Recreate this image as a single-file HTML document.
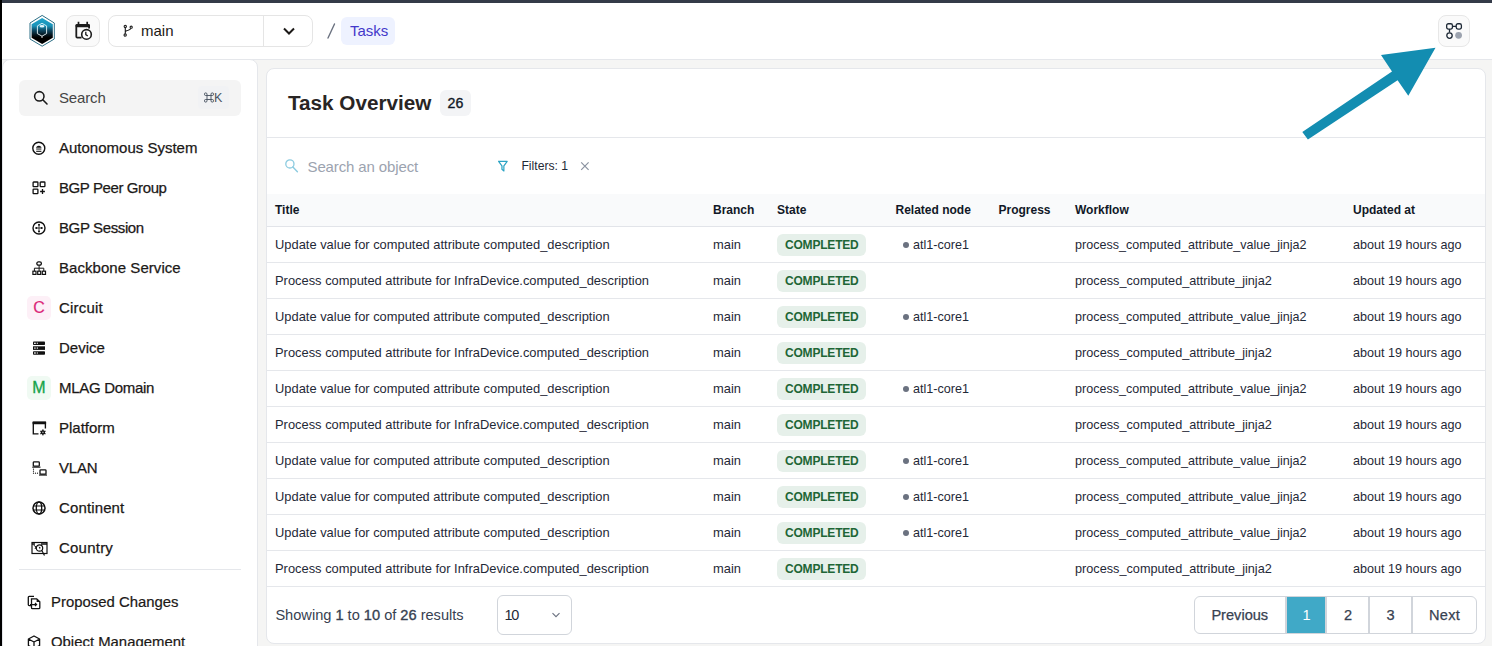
<!DOCTYPE html>
<html><head><meta charset="utf-8">
<style>
*{box-sizing:border-box;margin:0;padding:0}
html,body{width:1492px;height:646px;overflow:hidden;background:#fff}
body{font-family:"Liberation Sans",sans-serif;color:#1f2937;position:relative}
.abs{position:absolute}
#topbar{left:0;top:0;width:1492px;height:3px;background:#343b48}
#leftbar{left:0;top:0;width:2px;height:646px;background:#000;z-index:5}
#header{left:2px;top:3px;width:1490px;height:57px;background:#fff;border-bottom:1px solid #e5e7eb}
#main{left:2px;top:60px;width:1490px;height:586px;background:#f5f5f4}
#sidebar{left:2px;top:59px;width:256px;height:600px;background:#fff;border:1px solid #e5e7eb;border-radius:8px}
#card{left:266px;top:68px;width:1220px;height:576px;background:#fff;border:1px solid #e5e7eb;border-radius:8px;overflow:hidden}
.item{font-size:15px;line-height:20px;color:#1c1917;white-space:nowrap;-webkit-text-stroke:0.25px #1c1917}
.item2{font-size:14.9px;line-height:20px;color:#1c1917;white-space:nowrap;-webkit-text-stroke:0.2px #1c1917}
.t{white-space:nowrap}
.b{-webkit-text-stroke:0.35px #374151}
</style></head><body>
<div id="main" class="abs"></div>
<div id="header" class="abs">
  <svg class="abs" style="left:25px;top:11px" width="30" height="36" viewBox="0 0 30 36">
    <defs><linearGradient id="lg" x1="0" y1="0" x2="0" y2="1">
      <stop offset="0" stop-color="#1ea3c9"/><stop offset="0.3" stop-color="#1a93b9"/>
      <stop offset="0.48" stop-color="#0e4660"/><stop offset="0.66" stop-color="#03121a"/><stop offset="0.75" stop-color="#000"/><stop offset="1" stop-color="#000"/></linearGradient></defs>
    <polygon points="15.15,1.4 27.3,9 27.3,25 15.15,32.2 3,25 3,9" fill="#fff" stroke="#2d6f86" stroke-width="1"/>
    <polygon points="15.15,3.9 25.8,10.2 25.8,23.8 15.15,30 4.6,23.8 4.6,10.2" fill="url(#lg)"/>
    <polygon points="15,9.3 19.6,11.9 19.6,19.6 15,22.2 10.4,19.6 10.4,11.9" fill="none" stroke="#e8f6fb" stroke-width="0.9"/>
    <path d="M15,22.2 V24" stroke="#fff" stroke-width="0.9" fill="none"/>
    <ellipse cx="15" cy="12.2" rx="2.4" ry="1.3" fill="#e3f5fb"/>
  </svg>
  <div class="abs" style="left:64px;top:12px;width:34px;height:32px;background:#fafafa;border:1px solid #e7e7e7;border-radius:8px"></div>
  <svg class="abs" style="left:73px;top:17px" width="20" height="22" viewBox="0 0 20 22">
    <path d="M3.5,1.8 V4.8 M12.2,1.8 V4.8" stroke="#1c1c1c" stroke-width="1.7" fill="none"/>
    <path d="M6.5,17.6 H2.3 Q1.3,17.6 1.3,16.6 V5.5 Q1.3,4.9 2.3,4.9 H13.1 Q14.1,4.9 14.1,5.5 V8.5" stroke="#1c1c1c" stroke-width="1.8" fill="none"/>
    <rect x="0.6" y="4.25" width="14.2" height="2.9" rx="0.8" fill="#1c1c1c"/>
    <circle cx="11.5" cy="14.4" r="4.8" fill="#fff" stroke="#1c1c1c" stroke-width="1.6"/>
    <path d="M10.8,11.8 V14.6 L12.8,16" stroke="#1c1c1c" stroke-width="1.3" fill="none"/>
  </svg>
  <div class="abs" style="left:106px;top:12px;width:205px;height:32px;background:#fff;border:1px solid #e5e5e5;border-radius:8px"></div>
  <div class="abs" style="left:261px;top:13px;width:1px;height:30px;background:#e5e5e5"></div>
  <svg class="abs" style="left:121px;top:21px" width="12" height="14" viewBox="0 0 12 14">
    <path d="M2.3,3.5 V10 M2.3,8.2 Q2.5,6.6 5.2,6.2 Q7.5,5.8 8,4.2" stroke="#222" stroke-width="1.15" fill="none"/>
    <circle cx="2.3" cy="2.5" r="1.15" fill="#fff" stroke="#222" stroke-width="1.1"/>
    <circle cx="2.2" cy="11" r="1.15" fill="#fff" stroke="#222" stroke-width="1.1"/>
    <circle cx="8.2" cy="3.2" r="1.1" fill="#fff" stroke="#222" stroke-width="1.1"/>
  </svg>
  <div class="abs" style="left:139px;top:18px;font-size:15px;line-height:20px;color:#1c1917">main</div>
  <svg class="abs" style="left:280px;top:23px" width="14" height="10" viewBox="0 0 14 10">
    <path d="M2,2.5 L7,7.5 L12,2.5" stroke="#1c1917" stroke-width="2" fill="none"/>
  </svg>
  <svg class="abs" style="left:323px;top:19px" width="12" height="18" viewBox="0 0 12 18"><path d="M9.5,2 L3,16" stroke="#6b7280" stroke-width="1.4" stroke-linecap="round"/></svg>
  <div class="abs" style="left:339px;top:14px;width:54px;height:28px;background:#eef2ff;border-radius:6px"></div>
  <div class="abs" style="left:348px;top:18px;font-size:15px;line-height:20px;color:#4338ca">Tasks</div>
  <div class="abs" style="left:1436px;top:12px;width:32px;height:32px;background:#fafafa;border:1px solid #e7e7e7;border-radius:8px"></div>
  <svg class="abs" style="left:1444px;top:20px" width="18" height="18" viewBox="0 0 18 18">
    <rect x="0.65" y="0.75" width="5.8" height="5.3" rx="1.7" fill="none" stroke="#1f2a37" stroke-width="1.3"/>
    <rect x="10.2" y="0.75" width="5.2" height="5.3" rx="1.7" fill="none" stroke="#1f2a37" stroke-width="1.3"/>
    <path d="M6.4,3.4 H10.2 M3.5,6 V9.5" stroke="#1f2a37" stroke-width="1.3"/>
    <circle cx="3.5" cy="12.6" r="2.7" fill="none" stroke="#1f2a37" stroke-width="1.3"/>
    <circle cx="12.6" cy="12.35" r="3.4" fill="#9ca3af"/>
  </svg>
</div>
<div id="topbar" class="abs"></div>
<div id="leftbar" class="abs"></div>
<div id="sidebar" class="abs"></div>
<div id="sidebarc">
<div class="abs" style="left:19px;top:80px;width:222px;height:36px;background:#f4f4f4;border-radius:6px"></div>
<svg class="abs" style="left:32px;top:89px" width="18" height="18" viewBox="0 0 18 18"><circle cx="7.3" cy="7.3" r="4.7" stroke="#1a1a1a" stroke-width="1.55" fill="none"/><path d="M10.8,10.8 L15,15" stroke="#1a1a1a" stroke-width="1.6" stroke-linecap="round"/></svg>
<div class="abs" style="left:59px;top:88px;font-size:15px;line-height:20px;color:#454545;letter-spacing:-0.15px">Search</div>
<div class="abs" style="left:198px;top:86px;width:31px;height:23px;background:#f1f2f4;border-radius:4px"></div>
<svg class="abs" style="left:204px;top:92px" width="10" height="11" viewBox="0 0 10 11"><path d="M3,3.5 H7 V7.5 H3 Z M3,3.5 V2.2 A1.3,1.3 0 1,0 1.7,3.5 H3 M7,3.5 V2.2 A1.3,1.3 0 1,1 8.3,3.5 H7 M3,7.5 V8.8 A1.3,1.3 0 1,1 1.7,7.5 H3 M7,7.5 V8.8 A1.3,1.3 0 1,0 8.3,7.5 H7" stroke="#4b5563" stroke-width="0.95" fill="none"/></svg>
<div class="abs" style="left:214px;top:90px;font-size:12.5px;line-height:16px;color:#4b5563">K</div>
<svg class="abs" style="left:32px;top:140.5px" width="15" height="15" viewBox="0 0 15 15"><circle cx="6.8" cy="7.3" r="6" stroke="#111" stroke-width="1.4" fill="none"/><path d="M4.3,5.9 Q6.8,3.4 9.3,5.9 Z" fill="#111"/><path d="M4.2,6.7 H9.4 M4.2,8.1 H9.4" stroke="#111" stroke-width="0.9"/><path d="M4.2,10.3 H9.4" stroke="#111" stroke-width="1.1"/></svg><div class="abs item" style="left:59px;top:137.7px">Autonomous System</div>
<svg class="abs" style="left:32px;top:180.5px" width="15" height="15" viewBox="0 0 15 15"><rect x="1.1" y="1" width="4.8" height="4.7" rx="0.6" stroke="#111" fill="none" stroke-width="1.3"/><rect x="8.2" y="1" width="4.7" height="4.7" rx="0.6" stroke="#111" fill="none" stroke-width="1.3"/><rect x="1.1" y="8.1" width="4.8" height="4.5" rx="0.6" stroke="#111" fill="none" stroke-width="1.3"/><path d="M8.1,10.5 H12.9 M10.5,8.1 V12.9" stroke="#111" stroke-width="1.3"/></svg><div class="abs item" style="left:59px;top:177.7px;letter-spacing:-0.4px">BGP Peer Group</div>
<svg class="abs" style="left:32px;top:220.5px" width="15" height="15" viewBox="0 0 15 15"><circle cx="7" cy="7" r="6" stroke="#111" fill="none" stroke-width="1.4"/><circle cx="7" cy="3.8" r="1" fill="#111"/><circle cx="7" cy="10.4" r="1" fill="#111"/><circle cx="4.3" cy="7" r="1.1" fill="#111"/><circle cx="9.7" cy="7" r="1.1" fill="#111"/><path d="M7,3.8 V10.4 M4.3,7 H9.7" stroke="#111" stroke-width="0.8"/></svg><div class="abs item" style="left:59px;top:217.7px;letter-spacing:-0.38px">BGP Session</div>
<svg class="abs" style="left:32px;top:260.5px" width="15" height="15" viewBox="0 0 15 15"><rect x="4.8" y="0.9" width="4.6" height="3.3" rx="1.6" stroke="#111" fill="none" stroke-width="1.3"/><path d="M7.1,4.2 V7.2 M2.4,10 V7.2 H11.8 V10 M7.1,7.2 V10" stroke="#111" stroke-width="1" fill="none"/><rect x="0.9" y="10.2" width="3.1" height="3.2" stroke="#111" fill="none" stroke-width="1.2"/><rect x="5.7" y="10.2" width="3" height="3.2" stroke="#111" fill="none" stroke-width="1.2"/><rect x="10.3" y="10.2" width="3.2" height="3.2" stroke="#111" fill="none" stroke-width="1.2"/></svg><div class="abs item" style="left:59px;top:257.7px;letter-spacing:0.05px">Backbone Service</div>
<div class="abs" style="left:27px;top:296.0px;width:24px;height:24px;background:#fdf0f7;border-radius:5px"></div><div class="abs" style="left:27px;top:296.0px;width:24px;height:24px;line-height:24px;text-align:center;font-size:16px;color:#db2777;-webkit-text-stroke:0.2px #db2777">C</div><div class="abs item" style="left:59px;top:297.7px;letter-spacing:0.18px">Circuit</div>
<svg class="abs" style="left:32px;top:340.5px" width="15" height="15" viewBox="0 0 15 15"><rect x="1" y="0.5" width="12" height="3.6" rx="0.8" fill="#111"/><rect x="1" y="5.3" width="12" height="3.6" fill="#111"/><rect x="1" y="10.2" width="12" height="3.6" rx="0.8" fill="#111"/><rect x="2" y="1.7" width="1.8" height="1.2" fill="#fff"/><rect x="4.8" y="1.6" width="0.9" height="1.4" fill="#fff"/><rect x="2" y="6.5" width="1.8" height="1.2" fill="#ccc"/><rect x="4.8" y="6.3" width="0.9" height="1.6" fill="#fff"/><rect x="2" y="11.4" width="1.8" height="1.2" fill="#fff"/><rect x="4.8" y="11.3" width="0.9" height="1.4" fill="#fff"/></svg><div class="abs item" style="left:59px;top:337.7px">Device</div>
<div class="abs" style="left:27px;top:376.0px;width:24px;height:24px;background:#f0faf3;border-radius:5px"></div><div class="abs" style="left:27px;top:376.0px;width:24px;height:24px;line-height:24px;text-align:center;font-size:16px;color:#16a34a;-webkit-text-stroke:0.3px #16a34a">M</div><div class="abs item" style="left:59px;top:377.7px;letter-spacing:-0.3px">MLAG Domain</div>
<svg class="abs" style="left:32px;top:420.5px" width="15" height="15" viewBox="0 0 15 15"><path d="M6.5,12.9 H1.3 V1.5 H13.4 V7.4" stroke="#111" stroke-width="1.35" fill="none"/><rect x="0.6" y="0.5" width="13.5" height="2.8" rx="0.5" fill="#111"/><circle cx="10.9" cy="11.4" r="2.1" fill="#111"/><g fill="#111"><rect x="10.3" y="8.4" width="1.2" height="6"/><rect x="10.3" y="8.4" width="1.2" height="6" transform="rotate(60 10.9 11.4)"/><rect x="10.3" y="8.4" width="1.2" height="6" transform="rotate(120 10.9 11.4)"/></g><circle cx="10.9" cy="11.4" r="0.8" fill="#aaa"/></svg><div class="abs item" style="left:59px;top:417.7px">Platform</div>
<svg class="abs" style="left:32px;top:460.5px" width="15" height="15" viewBox="0 0 15 15"><rect x="1.3" y="0.8" width="6" height="4.4" rx="0.8" stroke="#111" stroke-width="1.3" fill="none"/><rect x="0.2" y="5.6" width="8.3" height="1.1" fill="#111"/><rect x="8" y="8.8" width="6" height="4.4" rx="0.8" stroke="#111" stroke-width="1.3" fill="none"/><rect x="7" y="13.5" width="8" height="1.1" fill="#111"/><circle cx="1.5" cy="8.2" r="0.6" fill="#111"/><circle cx="1.5" cy="10.2" r="0.6" fill="#111"/><circle cx="1.5" cy="12.2" r="0.6" fill="#111"/><circle cx="3.5" cy="12.2" r="0.6" fill="#111"/><circle cx="5.5" cy="12.2" r="0.6" fill="#111"/></svg><div class="abs item" style="left:59px;top:457.7px;letter-spacing:-0.18px">VLAN</div>
<svg class="abs" style="left:32px;top:500.5px" width="15" height="15" viewBox="0 0 15 15"><circle cx="7" cy="7" r="6" stroke="#111" fill="none" stroke-width="1.5"/><ellipse cx="7" cy="7" rx="2.7" ry="6" stroke="#111" fill="none" stroke-width="1.3"/><path d="M1,5 H13 M1,9 H13" stroke="#111" stroke-width="1.2"/></svg><div class="abs item" style="left:59px;top:497.7px;letter-spacing:0.13px">Continent</div>
<svg class="abs" style="left:31px;top:540.5px" width="17" height="15" viewBox="0 0 17 15"><rect x="1" y="1.5" width="15" height="11" stroke="#111" stroke-width="1.2" fill="none"/><path d="M1,3 H4 M10,3 H16" stroke="#111" stroke-width="1.4"/><circle cx="8.5" cy="7" r="3.2" stroke="#111" stroke-width="1.2" fill="none"/><path d="M7.5,5.5 L9.5,6.2 L9,8.5 Z" fill="#111"/><path d="M10.8,9.5 L13.5,14.5" stroke="#111" stroke-width="1.2"/><path d="M2.5,4 L5,6 L4,8" stroke="#111" stroke-width="1" fill="none"/></svg><div class="abs item" style="left:59px;top:537.7px;letter-spacing:0.22px">Country</div>
<div class="abs" style="left:19px;top:569px;width:222px;height:1px;background:#e5e7eb"></div>
<svg class="abs" style="left:27px;top:595px" width="15" height="15" viewBox="0 0 15 15"><path d="M7,1.3 H2.2 Q1.3,1.3 1.3,2.2 V9.8 Q1.3,10.6 2.2,10.6 H4.5" stroke="#111" stroke-width="1.3" fill="none"/><path d="M4.5,3.8 H9.7 L12.8,6.8 V12.7 Q12.8,13.6 11.9,13.6 H5.4 Q4.5,13.6 4.5,12.7 V3.8 Z" stroke="#111" stroke-width="1.3" fill="none"/><path d="M9.6,3.8 L12.8,7 H9.6 Z" fill="#111"/><path d="M3,9.6 H9.5 M8,8 L9.6,9.6 L8,11.2" stroke="#111" stroke-width="1.2" fill="none"/></svg><div class="abs item2" style="left:51px;top:592px">Proposed Changes</div>
<svg class="abs" style="left:27px;top:635px" width="15" height="15" viewBox="0 0 15 15"><path d="M7,1 L12.6,4 V10.5 L7,13.5 L1.4,10.5 V4 Z M1.4,4 L7,7 L12.6,4 M7,7 V13.5" stroke="#111" stroke-width="1.3" fill="none" stroke-linejoin="round"/></svg><div class="abs item2" style="left:51px;top:632px">Object Management</div>
</div>
<div id="card" class="abs"></div>
<div id="cardc">
<div class="abs t" style="left:288px;top:88.73px;font-size:20.7px;line-height:27px;color:#292524;font-weight:700;">Task Overview</div>
<div class="abs" style="left:440px;top:90px;width:30.5px;height:25.8px;background:#f3f4f6;border-radius:6px"></div>
<div class="abs t" style="left:447.5px;top:94.18px;font-size:14.2px;line-height:18px;color:#111827;-webkit-text-stroke:0.35px #111827;">26</div>
<div class="abs" style="left:267px;top:137px;width:1218px;height:1px;background:#e5e7eb"></div>
<svg class="abs" style="left:283px;top:158px" width="17" height="17" viewBox="0 0 17 17"><circle cx="6.9" cy="5.9" r="4.1" stroke="#8ccbe0" stroke-width="1.3" fill="none"/><path d="M9.9,9.1 L14.4,13.8" stroke="#8ccbe0" stroke-width="1.4" stroke-linecap="round"/></svg>
<div class="abs t" style="left:307.5px;top:157.10px;font-size:15px;line-height:20px;color:#9ca3af;letter-spacing:-0.12px;">Search an object</div>
<svg class="abs" style="left:496px;top:159px" width="14" height="14" viewBox="0 0 14 14"><path d="M2.6,2.3 H11.2 L7.9,6.9 V12 L5.9,10.3 V6.9 Z" stroke="#2aa3c4" stroke-width="1.15" fill="none" stroke-linejoin="round"/><path d="M6.2,6.5 H7.6 V10.5 L6.2,9.6 Z" fill="#2aa3c4" opacity="0.3"/></svg>
<div class="abs t" style="left:521.4px;top:157.77px;font-size:12.2px;line-height:16px;color:#1f2937;">Filters: 1</div>
<svg class="abs" style="left:579px;top:160px" width="12" height="12" viewBox="0 0 12 12"><path d="M2.2,2.4 L9.6,9.8 M9.6,2.4 L2.2,9.8" stroke="#8b93a1" stroke-width="1.2"/></svg>
<div class="abs" style="left:267px;top:194px;width:1218px;height:32px;background:#f9fafb"></div>
<div class="abs" style="left:267px;top:226px;width:1218px;height:1px;background:#e2e4e9"></div>
<div class="abs t" style="left:275px;top:201.54px;font-size:12px;line-height:16px;color:#111827;font-weight:700;">Title</div>
<div class="abs t" style="left:713px;top:201.54px;font-size:12px;line-height:16px;color:#111827;font-weight:700;">Branch</div>
<div class="abs t" style="left:777px;top:201.54px;font-size:12px;line-height:16px;color:#111827;font-weight:700;">State</div>
<div class="abs t" style="left:895.5px;top:201.54px;font-size:12px;line-height:16px;color:#111827;font-weight:700;">Related node</div>
<div class="abs t" style="left:998.5px;top:201.54px;font-size:12px;line-height:16px;color:#111827;font-weight:700;">Progress</div>
<div class="abs t" style="left:1075px;top:201.54px;font-size:12px;line-height:16px;color:#111827;font-weight:700;">Workflow</div>
<div class="abs t" style="left:1353px;top:201.54px;font-size:12px;line-height:16px;color:#111827;font-weight:700;">Updated at</div>
<div class="abs t" style="left:275px;top:235.73px;font-size:12.9px;line-height:17px;color:#1f2937;">Update value for computed attribute computed_description</div>
<div class="abs t" style="left:713px;top:235.73px;font-size:12.9px;line-height:17px;color:#1f2937;">main</div>
<div class="abs" style="left:777px;top:234px;width:89px;height:22px;background:#e6f0ea;border-radius:6px"></div>
<div class="abs t" style="left:785px;top:236.64px;font-size:12px;line-height:16px;color:#1e6636;font-weight:700;letter-spacing:-0.2px;">COMPLETED</div>
<div class="abs" style="left:902.8px;top:241.5px;width:6px;height:6px;border-radius:50%;background:#6b7280"></div>
<div class="abs t" style="left:913px;top:236.93px;font-size:12.6px;line-height:16px;color:#1f2937;">atl1-core1</div>
<div class="abs t" style="left:1075px;top:236.75px;font-size:12.55px;line-height:16px;color:#1f2937;">process_computed_attribute_value_jinja2</div>
<div class="abs t" style="left:1353px;top:237.33px;font-size:12.6px;line-height:16px;color:#1f2937;">about 19 hours ago</div>
<div class="abs" style="left:267px;top:262px;width:1218px;height:1px;background:#e5e7eb"></div>
<div class="abs t" style="left:275px;top:271.73px;font-size:12.9px;line-height:17px;color:#1f2937;">Process computed attribute for InfraDevice.computed_description</div>
<div class="abs t" style="left:713px;top:271.73px;font-size:12.9px;line-height:17px;color:#1f2937;">main</div>
<div class="abs" style="left:777px;top:270px;width:89px;height:22px;background:#e6f0ea;border-radius:6px"></div>
<div class="abs t" style="left:785px;top:272.64px;font-size:12px;line-height:16px;color:#1e6636;font-weight:700;letter-spacing:-0.2px;">COMPLETED</div>
<div class="abs t" style="left:1075px;top:272.70px;font-size:12.7px;line-height:17px;color:#1f2937;">process_computed_attribute_jinja2</div>
<div class="abs t" style="left:1353px;top:273.33px;font-size:12.6px;line-height:16px;color:#1f2937;">about 19 hours ago</div>
<div class="abs" style="left:267px;top:298px;width:1218px;height:1px;background:#e5e7eb"></div>
<div class="abs t" style="left:275px;top:307.73px;font-size:12.9px;line-height:17px;color:#1f2937;">Update value for computed attribute computed_description</div>
<div class="abs t" style="left:713px;top:307.73px;font-size:12.9px;line-height:17px;color:#1f2937;">main</div>
<div class="abs" style="left:777px;top:306px;width:89px;height:22px;background:#e6f0ea;border-radius:6px"></div>
<div class="abs t" style="left:785px;top:308.64px;font-size:12px;line-height:16px;color:#1e6636;font-weight:700;letter-spacing:-0.2px;">COMPLETED</div>
<div class="abs" style="left:902.8px;top:313.5px;width:6px;height:6px;border-radius:50%;background:#6b7280"></div>
<div class="abs t" style="left:913px;top:308.93px;font-size:12.6px;line-height:16px;color:#1f2937;">atl1-core1</div>
<div class="abs t" style="left:1075px;top:308.75px;font-size:12.55px;line-height:16px;color:#1f2937;">process_computed_attribute_value_jinja2</div>
<div class="abs t" style="left:1353px;top:309.33px;font-size:12.6px;line-height:16px;color:#1f2937;">about 19 hours ago</div>
<div class="abs" style="left:267px;top:334px;width:1218px;height:1px;background:#e5e7eb"></div>
<div class="abs t" style="left:275px;top:343.73px;font-size:12.9px;line-height:17px;color:#1f2937;">Process computed attribute for InfraDevice.computed_description</div>
<div class="abs t" style="left:713px;top:343.73px;font-size:12.9px;line-height:17px;color:#1f2937;">main</div>
<div class="abs" style="left:777px;top:342px;width:89px;height:22px;background:#e6f0ea;border-radius:6px"></div>
<div class="abs t" style="left:785px;top:344.64px;font-size:12px;line-height:16px;color:#1e6636;font-weight:700;letter-spacing:-0.2px;">COMPLETED</div>
<div class="abs t" style="left:1075px;top:344.70px;font-size:12.7px;line-height:17px;color:#1f2937;">process_computed_attribute_jinja2</div>
<div class="abs t" style="left:1353px;top:345.33px;font-size:12.6px;line-height:16px;color:#1f2937;">about 19 hours ago</div>
<div class="abs" style="left:267px;top:370px;width:1218px;height:1px;background:#e5e7eb"></div>
<div class="abs t" style="left:275px;top:379.73px;font-size:12.9px;line-height:17px;color:#1f2937;">Update value for computed attribute computed_description</div>
<div class="abs t" style="left:713px;top:379.73px;font-size:12.9px;line-height:17px;color:#1f2937;">main</div>
<div class="abs" style="left:777px;top:378px;width:89px;height:22px;background:#e6f0ea;border-radius:6px"></div>
<div class="abs t" style="left:785px;top:380.64px;font-size:12px;line-height:16px;color:#1e6636;font-weight:700;letter-spacing:-0.2px;">COMPLETED</div>
<div class="abs" style="left:902.8px;top:385.5px;width:6px;height:6px;border-radius:50%;background:#6b7280"></div>
<div class="abs t" style="left:913px;top:380.93px;font-size:12.6px;line-height:16px;color:#1f2937;">atl1-core1</div>
<div class="abs t" style="left:1075px;top:380.75px;font-size:12.55px;line-height:16px;color:#1f2937;">process_computed_attribute_value_jinja2</div>
<div class="abs t" style="left:1353px;top:381.33px;font-size:12.6px;line-height:16px;color:#1f2937;">about 19 hours ago</div>
<div class="abs" style="left:267px;top:406px;width:1218px;height:1px;background:#e5e7eb"></div>
<div class="abs t" style="left:275px;top:415.73px;font-size:12.9px;line-height:17px;color:#1f2937;">Process computed attribute for InfraDevice.computed_description</div>
<div class="abs t" style="left:713px;top:415.73px;font-size:12.9px;line-height:17px;color:#1f2937;">main</div>
<div class="abs" style="left:777px;top:414px;width:89px;height:22px;background:#e6f0ea;border-radius:6px"></div>
<div class="abs t" style="left:785px;top:416.64px;font-size:12px;line-height:16px;color:#1e6636;font-weight:700;letter-spacing:-0.2px;">COMPLETED</div>
<div class="abs t" style="left:1075px;top:416.70px;font-size:12.7px;line-height:17px;color:#1f2937;">process_computed_attribute_jinja2</div>
<div class="abs t" style="left:1353px;top:417.33px;font-size:12.6px;line-height:16px;color:#1f2937;">about 19 hours ago</div>
<div class="abs" style="left:267px;top:442px;width:1218px;height:1px;background:#e5e7eb"></div>
<div class="abs t" style="left:275px;top:451.73px;font-size:12.9px;line-height:17px;color:#1f2937;">Update value for computed attribute computed_description</div>
<div class="abs t" style="left:713px;top:451.73px;font-size:12.9px;line-height:17px;color:#1f2937;">main</div>
<div class="abs" style="left:777px;top:450px;width:89px;height:22px;background:#e6f0ea;border-radius:6px"></div>
<div class="abs t" style="left:785px;top:452.64px;font-size:12px;line-height:16px;color:#1e6636;font-weight:700;letter-spacing:-0.2px;">COMPLETED</div>
<div class="abs" style="left:902.8px;top:457.5px;width:6px;height:6px;border-radius:50%;background:#6b7280"></div>
<div class="abs t" style="left:913px;top:452.93px;font-size:12.6px;line-height:16px;color:#1f2937;">atl1-core1</div>
<div class="abs t" style="left:1075px;top:452.75px;font-size:12.55px;line-height:16px;color:#1f2937;">process_computed_attribute_value_jinja2</div>
<div class="abs t" style="left:1353px;top:453.33px;font-size:12.6px;line-height:16px;color:#1f2937;">about 19 hours ago</div>
<div class="abs" style="left:267px;top:478px;width:1218px;height:1px;background:#e5e7eb"></div>
<div class="abs t" style="left:275px;top:487.73px;font-size:12.9px;line-height:17px;color:#1f2937;">Update value for computed attribute computed_description</div>
<div class="abs t" style="left:713px;top:487.73px;font-size:12.9px;line-height:17px;color:#1f2937;">main</div>
<div class="abs" style="left:777px;top:486px;width:89px;height:22px;background:#e6f0ea;border-radius:6px"></div>
<div class="abs t" style="left:785px;top:488.64px;font-size:12px;line-height:16px;color:#1e6636;font-weight:700;letter-spacing:-0.2px;">COMPLETED</div>
<div class="abs" style="left:902.8px;top:493.5px;width:6px;height:6px;border-radius:50%;background:#6b7280"></div>
<div class="abs t" style="left:913px;top:488.93px;font-size:12.6px;line-height:16px;color:#1f2937;">atl1-core1</div>
<div class="abs t" style="left:1075px;top:488.75px;font-size:12.55px;line-height:16px;color:#1f2937;">process_computed_attribute_value_jinja2</div>
<div class="abs t" style="left:1353px;top:489.33px;font-size:12.6px;line-height:16px;color:#1f2937;">about 19 hours ago</div>
<div class="abs" style="left:267px;top:514px;width:1218px;height:1px;background:#e5e7eb"></div>
<div class="abs t" style="left:275px;top:523.73px;font-size:12.9px;line-height:17px;color:#1f2937;">Update value for computed attribute computed_description</div>
<div class="abs t" style="left:713px;top:523.73px;font-size:12.9px;line-height:17px;color:#1f2937;">main</div>
<div class="abs" style="left:777px;top:522px;width:89px;height:22px;background:#e6f0ea;border-radius:6px"></div>
<div class="abs t" style="left:785px;top:524.64px;font-size:12px;line-height:16px;color:#1e6636;font-weight:700;letter-spacing:-0.2px;">COMPLETED</div>
<div class="abs" style="left:902.8px;top:529.5px;width:6px;height:6px;border-radius:50%;background:#6b7280"></div>
<div class="abs t" style="left:913px;top:524.93px;font-size:12.6px;line-height:16px;color:#1f2937;">atl1-core1</div>
<div class="abs t" style="left:1075px;top:524.75px;font-size:12.55px;line-height:16px;color:#1f2937;">process_computed_attribute_value_jinja2</div>
<div class="abs t" style="left:1353px;top:525.33px;font-size:12.6px;line-height:16px;color:#1f2937;">about 19 hours ago</div>
<div class="abs" style="left:267px;top:550px;width:1218px;height:1px;background:#e5e7eb"></div>
<div class="abs t" style="left:275px;top:559.73px;font-size:12.9px;line-height:17px;color:#1f2937;">Process computed attribute for InfraDevice.computed_description</div>
<div class="abs t" style="left:713px;top:559.73px;font-size:12.9px;line-height:17px;color:#1f2937;">main</div>
<div class="abs" style="left:777px;top:558px;width:89px;height:22px;background:#e6f0ea;border-radius:6px"></div>
<div class="abs t" style="left:785px;top:560.64px;font-size:12px;line-height:16px;color:#1e6636;font-weight:700;letter-spacing:-0.2px;">COMPLETED</div>
<div class="abs t" style="left:1075px;top:560.70px;font-size:12.7px;line-height:17px;color:#1f2937;">process_computed_attribute_jinja2</div>
<div class="abs t" style="left:1353px;top:561.33px;font-size:12.6px;line-height:16px;color:#1f2937;">about 19 hours ago</div>
<div class="abs" style="left:267px;top:586px;width:1218px;height:1px;background:#e5e7eb"></div>
<div class="abs t" style="left:275.4px;top:605.64px;font-size:14.6px;line-height:19px;color:#374151;">Showing <span class="b">1</span> to <span class="b">10</span> of <span class="b">26</span> results</div>
<div class="abs" style="left:497px;top:595px;width:75px;height:40px;border:1px solid #d1d5db;border-radius:6px;background:#fff"></div>
<div class="abs t" style="left:504.5px;top:606.08px;font-size:14.5px;line-height:19px;color:#1f2937;letter-spacing:-1.3px;">10</div>
<svg class="abs" style="left:550px;top:610px" width="12" height="10" viewBox="0 0 12 10"><path d="M2.5,3.2 L6,6.6 L9.5,3.2" stroke="#6b7280" stroke-width="1.15" fill="none"/></svg>
<div class="abs" style="left:1194px;top:596px;width:283px;height:38px;border:1px solid #d1d5db;border-radius:6px;background:#fff;overflow:hidden"><div class="abs" style="left:91px;top:0;width:40px;height:36px;background:#40a9c7"></div><div class="abs" style="left:90px;top:0;width:2px;height:36px;background:#d1d5db"></div><div class="abs" style="left:130px;top:0;width:2px;height:36px;background:#d1d5db"></div><div class="abs" style="left:173px;top:0;width:2px;height:36px;background:#d1d5db"></div><div class="abs" style="left:216px;top:0;width:2px;height:36px;background:#d1d5db"></div></div>
<div class="abs t" style="left:1211.4px;top:605.64px;font-size:14.6px;line-height:19px;color:#374151;-webkit-text-stroke:0.25px #374151;">Previous</div>
<div class="abs t" style="left:1302.5px;top:605.64px;font-size:14.6px;line-height:19px;color:#ffffff;">1</div>
<div class="abs t" style="left:1344px;top:605.64px;font-size:14.6px;line-height:19px;color:#374151;-webkit-text-stroke:0.25px #374151;">2</div>
<div class="abs t" style="left:1386.5px;top:605.64px;font-size:14.6px;line-height:19px;color:#374151;-webkit-text-stroke:0.25px #374151;">3</div>
<div class="abs t" style="left:1429px;top:605.64px;font-size:14.6px;line-height:19px;color:#374151;letter-spacing:0.3px;-webkit-text-stroke:0.25px #374151;">Next</div>
<svg class="abs" style="left:0;top:0;z-index:10" width="1492" height="646" viewBox="0 0 1492 646"><polygon points="1302.3,132 1392,71.5 1381,55 1435.5,47.7 1408.3,95.8 1397.6,80.3 1307.9,139.6" fill="#138db1"/></svg>
</div><!--/cardc-->
</body></html>
